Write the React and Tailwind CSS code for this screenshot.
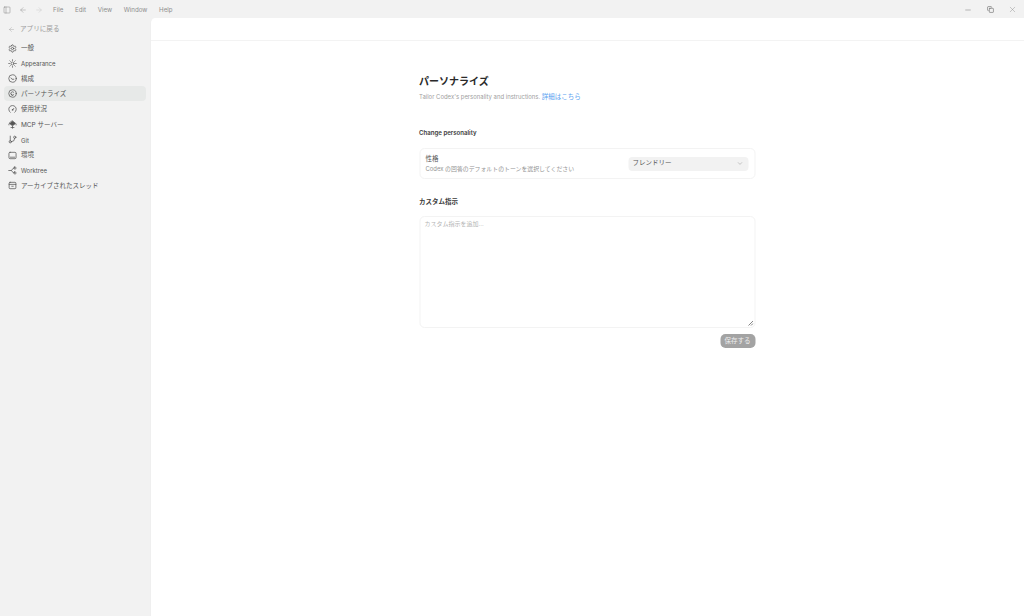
import { ArrowLeft, ArrowRight, ChevronDown, Settings, Sun, GitBranch, PanelLeft, Minus, Copy, X } from 'lucide-react'

const icon = (children) => (props) => (
  <svg width="9" height="9" viewBox="0 0 24 24" fill="none" stroke="currentColor" strokeWidth="2" strokeLinecap="round" strokeLinejoin="round" {...props}>
    {children}
  </svg>
)

const ConfigIcon = icon(
  <>
    <circle cx="12" cy="12" r="10" />
    <path d="M8 10.5 10.5 14h5" />
  </>
)
const PersonaIcon = icon(
  <>
    <circle cx="12" cy="12" r="10" />
    <path d="M15 8.5a4.5 4.5 0 1 0 0 7M9 13.5l2.5 4" />
  </>
)
const UsageIcon = icon(
  <>
    <path d="M6 19.5a10 10 0 1 1 12 0" />
    <path d="M12 13l3.5-4" />
    <circle cx="12" cy="13" r="1" />
  </>
)
const McpIcon = icon(
  <>
    <path d="M12 2.5 20 9l-8 6.5L4 9z" fill="currentColor" />
    <path d="M2.5 11v2M21.5 11v2M12 17v5M8 20h8" />
  </>
)
const EnvIcon = icon(
  <>
    <rect x="2.5" y="3.5" width="19" height="17" rx="3" />
    <path d="M6 16.5h12" />
  </>
)
const WorktreeIcon = icon(
  <>
    <path d="M2 12h7l5-6h2M9 12l5 6h2" />
    <rect x="16" y="3" width="5" height="5" rx="1" />
    <rect x="16" y="16" width="5" height="5" rx="1" />
  </>
)
const ArchiveIcon = icon(
  <>
    <rect x="3" y="3.5" width="18" height="17" rx="2.5" />
    <path d="M3 9h18M10 14h4" />
  </>
)

const NAV = [
  { label: '一般', Icon: Settings },
  { label: 'Appearance', Icon: Sun, latin: true },
  { label: '構成', Icon: ConfigIcon },
  { label: 'パーソナライズ', Icon: PersonaIcon, active: true },
  { label: '使用状況', Icon: UsageIcon },
  { label: 'MCP サーバー', Icon: McpIcon },
  { label: 'Git', Icon: GitBranch, latin: true },
  { label: '環境', Icon: EnvIcon },
  { label: 'Worktree', Icon: WorktreeIcon, latin: true },
  { label: 'アーカイブされたスレッド', Icon: ArchiveIcon },
]

const MENU = ['File', 'Edit', 'View', 'Window', 'Help']

export default function App() {
  return (
    <div className='flex h-[616px] w-[1024px] flex-col overflow-hidden bg-[#f2f2f2] font-["Inter","Noto_Sans_CJK_JP",sans-serif] text-[#2b2b2b]'>
      {/* タイトルバー */}
      <div className="flex h-[18px] shrink-0 items-center pl-[3px] pr-[7px] pt-[1px] text-[6.2px] text-[#8d8d8d]">
        <PanelLeft size={8} strokeWidth={1.3} className="text-[#777]" />
        <ArrowLeft size={8} strokeWidth={1.3} className="ml-[8px] text-[#888]" />
        <ArrowRight size={8} strokeWidth={1.3} className="ml-[8px] text-[#c4c4c4]" />
        <div className="ml-[10px] flex gap-[11.7px]">
          {MENU.map((m) => (
            <span key={m} className="leading-[10px]">{m}</span>
          ))}
        </div>
        <div className="ml-auto flex items-center gap-[14.5px] text-[#555]">
          <Minus size={8} strokeWidth={1.2} />
          <Copy size={7} strokeWidth={1.8} />
          <X size={9} strokeWidth={1.1} className="text-[#888]" />
        </div>
      </div>

      <div className="flex min-h-0 flex-1">
        {/* サイドバー */}
        <aside className="flex w-[150px] shrink-0 flex-col">
          <div className="mt-[4px] flex h-[15px] shrink-0 items-center gap-[5px] pl-[8px] text-[6.6px] text-[#9a9a9a]">
            <ArrowLeft size={7} strokeWidth={1.3} />
            <span className="pt-[1px]">アプリに戻る</span>
          </div>
          <nav className="mt-[3.5px] flex flex-col gap-[0.3px] px-1">
            {NAV.map(({ label, Icon, active, latin }) => (
              <div
                key={label}
                className={`flex h-[15px] items-center gap-[4px] rounded-[4px] pl-[4px] text-[#555] ${active ? 'bg-[#e7e9e8]' : ''}`}
              >
                <Icon className="shrink-0 text-[#555]" width="9" height="9" />
                <span className={latin ? 'pt-[1px] text-[6px]' : 'pt-[2px] text-[6.5px]'}>{label}</span>
              </div>
            ))}
          </nav>
        </aside>

        {/* メイン */}
        <main className="flex min-w-0 flex-1 flex-col rounded-tl-[5px] border-l border-[#efefef] bg-white">
          <div className="h-[23px] shrink-0 border-b border-[#f3f3f3]" />
          <div className="mx-auto flex w-[336px] -translate-x-[0.5px] flex-col pt-[32px]">
            <h1 className="text-[10px] font-semibold leading-[16px] text-[#2a2a2a]">パーソナライズ</h1>
            <p className="mt-[3px] text-[5.95px] leading-[10px] text-[#a0a0a0]">
              Tailor Codex's personality and instructions. <span className="text-[6.5px] text-[#5a9ff0]">詳細はこちら</span>
            </p>

            <h2 className="mt-[26px] text-[6.1px] font-semibold leading-[10px] text-[#3a3a3a]">Change personality</h2>
            <div className="mt-[10px] flex h-[31px] items-center justify-between rounded-[5px] border border-[#f3f3f3] px-[5.5px]">
              <div>
                <div className="text-[6.5px] leading-[10px] text-[#555]">性格</div>
                <div className="text-[5.9px] leading-[10px] text-[#939393]">Codex の回答のデフォルトのトーンを選択してください</div>
              </div>
              <div className="flex h-[14px] w-[120px] items-center justify-between rounded-[4px] bg-[#f2f2f2] pl-[4px] pr-[5px] text-[6.5px] text-[#555]">
                <span className="pt-[1px]">フレンドリー</span>
                <ChevronDown size={7} strokeWidth={1.3} className="text-[#777]" />
              </div>
            </div>

            <h2 className="mt-[18px] text-[6.5px] font-semibold leading-[10px] text-[#3a3a3a]">カスタム指示</h2>
            <div className="relative mt-[9px] h-[112px] rounded-[5px] border border-[#f3f3f3] pl-[4.5px] pt-[2px] text-[6px] leading-[10px] text-[#b4b4b4]">
              カスタム指示を追加...
              <svg width="6" height="6" viewBox="0 0 6 6" className="absolute bottom-[1px] right-[1px] text-[#777]">
                <path d="M1 5.5 5.5 1M3.5 5.5 5.5 3.5" stroke="currentColor" strokeWidth="0.9" fill="none" />
              </svg>
            </div>
            <div className="mt-[6px] flex justify-end">
              <div className="flex h-[14px] w-[35px] items-center justify-center rounded-[5px] bg-[#a3a3a3] pt-[1px] text-[6.5px] text-[#eeeeee]">
                保存する
              </div>
            </div>
          </div>
        </main>
      </div>
    </div>
  )
}
